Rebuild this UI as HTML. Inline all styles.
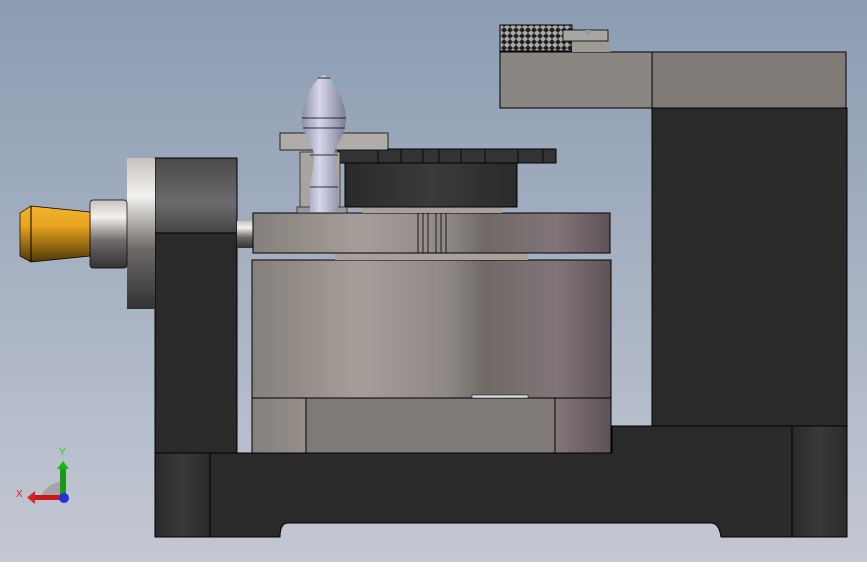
<!DOCTYPE html>
<html><head><style>body{margin:0;width:867px;height:562px;overflow:hidden}</style></head><body>
<svg width="867" height="562" viewBox="0 0 867 562" xmlns="http://www.w3.org/2000/svg">
<defs>
<linearGradient id="bg" x1="0" y1="0" x2="0" y2="1"><stop offset="0" stop-color="#8b9cb2"/><stop offset="1" stop-color="#c4c8d3"/></linearGradient>
<linearGradient id="cyl" x1="0" y1="0" x2="1" y2="0"><stop offset="0" stop-color="#85807b"/><stop offset="0.3" stop-color="#a69e99"/><stop offset="0.55" stop-color="#8e8883"/><stop offset="0.65" stop-color="#6f6965"/><stop offset="0.85" stop-color="#827578"/><stop offset="1" stop-color="#5d5257"/></linearGradient>
<linearGradient id="silv" x1="0" y1="0" x2="0" y2="1"><stop offset="0" stop-color="#c8c2bd"/><stop offset="0.25" stop-color="#f4f2ef"/><stop offset="0.6" stop-color="#6e6a68"/><stop offset="1" stop-color="#333"/></linearGradient>
<linearGradient id="gold" x1="0" y1="0" x2="0" y2="1"><stop offset="0" stop-color="#f4b22c"/><stop offset="0.35" stop-color="#e8a51f"/><stop offset="1" stop-color="#4e3708"/></linearGradient>
<linearGradient id="grayb" x1="0" y1="0" x2="0" y2="1"><stop offset="0" stop-color="#4a4a4a"/><stop offset="0.6" stop-color="#6c6b6d"/><stop offset="1" stop-color="#444"/></linearGradient>
<linearGradient id="lav" x1="0" y1="0" x2="1" y2="0"><stop offset="0" stop-color="#8e8eaa"/><stop offset="0.4" stop-color="#d6d6ea"/><stop offset="1" stop-color="#7c7c98"/></linearGradient>
<linearGradient id="dk" x1="0" y1="0" x2="1" y2="0"><stop offset="0" stop-color="#2a2a2a"/><stop offset="0.5" stop-color="#3a3a3a"/><stop offset="1" stop-color="#2a2a2a"/></linearGradient>
<pattern id="kn" width="6" height="6" patternUnits="userSpaceOnUse"><rect width="6" height="6" fill="#222"/><path d="M3 0L6 3L3 6L0 3Z" fill="#aaa"/></pattern>
</defs>
<rect width="867" height="562" fill="url(#bg)"/>
<!-- base -->
<path d="M155 453H612V426H847V537H721Q719 523 711 523H288Q280 523 280 537H155Z" fill="#2a2a2a" stroke="#000"/>
<rect x="155" y="453" width="55" height="84" fill="url(#dk)" stroke="#000"/>
<rect x="792" y="426" width="55" height="111" fill="url(#dk)" stroke="#000"/>
<rect x="652" y="108" width="195" height="318" fill="#2a2a2a" stroke="#000"/>
<!-- left column -->
<rect x="155" y="233" width="82" height="220" fill="#2a2a2a" stroke="#000"/>
<rect x="155" y="158" width="82" height="75" fill="url(#grayb)" stroke="#000"/>
<rect x="127" y="158" width="28" height="151" fill="url(#silv)"/>
<rect x="90" y="200" width="37" height="68" rx="3" fill="url(#silv)" stroke="#000" stroke-width="0.7"/>
<path d="M20 213L31 206L90 212V256L31 262L20 256Z" fill="url(#gold)" stroke="#000" stroke-width="0.7"/>
<line x1="31" y1="206" x2="31" y2="262" stroke="#000"/>
<rect x="237" y="221" width="16" height="27" fill="url(#silv)"/>
<!-- cylinders -->
<rect x="252" y="260" width="359" height="138" fill="url(#cyl)" stroke="#000"/>
<rect x="335" y="253" width="193" height="7" fill="#a8a09b"/>
<rect x="253" y="213" width="357" height="40" fill="url(#cyl)" stroke="#000"/>
<g stroke="#000" stroke-width="0.8"><line x1="418" y1="213" x2="418" y2="253"/><line x1="423" y1="213" x2="423" y2="253"/><line x1="428" y1="213" x2="428" y2="253"/><line x1="436" y1="213" x2="436" y2="253"/><line x1="441" y1="213" x2="441" y2="253"/><line x1="446" y1="213" x2="446" y2="253"/></g>
<rect x="252" y="398" width="359" height="55" fill="url(#cyl)" stroke="#000"/>
<rect x="306" y="398" width="249" height="55" fill="#7f7a75" stroke="#000"/>
<rect x="472" y="395" width="56" height="3" fill="#ddd" stroke="#000" stroke-width="0.5"/>
<!-- dark knob -->
<rect x="362" y="207" width="140" height="6" fill="#a8a09b"/>
<rect x="345" y="163" width="172" height="44" fill="url(#dk)" stroke="#000"/>
<rect x="338" y="149" width="218" height="14" fill="#333" stroke="#000"/>
<g stroke="#000" stroke-width="0.8"><line x1="378" y1="149" x2="378" y2="163"/><line x1="401" y1="149" x2="401" y2="163"/><line x1="423" y1="149" x2="423" y2="163"/><line x1="439" y1="149" x2="439" y2="163"/><line x1="461" y1="149" x2="461" y2="163"/><line x1="485" y1="149" x2="485" y2="163"/><line x1="518" y1="149" x2="518" y2="163"/><line x1="543" y1="149" x2="543" y2="163"/></g>
<!-- bracket & handle -->
<rect x="280" y="133" width="108" height="17" fill="#b0aca8" stroke="#000" stroke-width="0.8"/>
<rect x="300" y="152" width="40" height="58" fill="#a8a4a0" stroke="#000" stroke-width="0.6"/>
<rect x="297" y="207" width="50" height="6" fill="#999" stroke="#000" stroke-width="0.6"/>
<path d="M324 75C312 80 302 105 302 119C302 130 308 140 313 150C316 160 312 170 310 187V212H338V187C336 170 332 160 335 150C340 140 346 130 346 119C346 105 336 80 324 75Z" fill="url(#lav)"/>
<g stroke="#000" stroke-width="0.8"><line x1="302" y1="118" x2="346" y2="118"/><line x1="303" y1="128" x2="345" y2="128"/><line x1="310" y1="155" x2="338" y2="155"/><line x1="310" y1="187" x2="338" y2="187"/><line x1="318" y1="78" x2="330" y2="78"/></g>
<!-- top right -->
<rect x="500" y="52" width="152" height="56" fill="#8a8682" stroke="#000"/>
<rect x="652" y="52" width="194" height="56" fill="#7f7a76" stroke="#000"/>
<rect x="500" y="25" width="72" height="26" fill="url(#kn)" stroke="#000"/>
<rect x="572" y="38" width="38" height="14" fill="#9e9a96"/>
<rect x="563" y="30" width="45" height="11" fill="#aaa6a2" stroke="#000" stroke-width="0.8"/>
<rect x="585" y="30" width="5" height="5" fill="#8b9cb2"/>
<!-- triad -->
<path d="M62 500V482A22 22 0 0 0 40 500Z" fill="#999" opacity="0.7"/>
<rect x="60" y="467" width="6" height="33" fill="#1a9a1a"/>
<path d="M57 469L63 461L69 469Z" fill="#1fb31f"/>
<rect x="33" y="495" width="30" height="5" fill="#c81818"/>
<path d="M35 491L27 497.5L35 504Z" fill="#d22"/>
<circle cx="64" cy="498" r="5" fill="#2233dd"/>
<text x="59" y="455" font-family="Liberation Sans,sans-serif" font-size="10" fill="#2c2">Y</text>
<text x="16" y="497" font-family="Liberation Sans,sans-serif" font-size="10" fill="#d22">X</text>
</svg>
</body></html>
